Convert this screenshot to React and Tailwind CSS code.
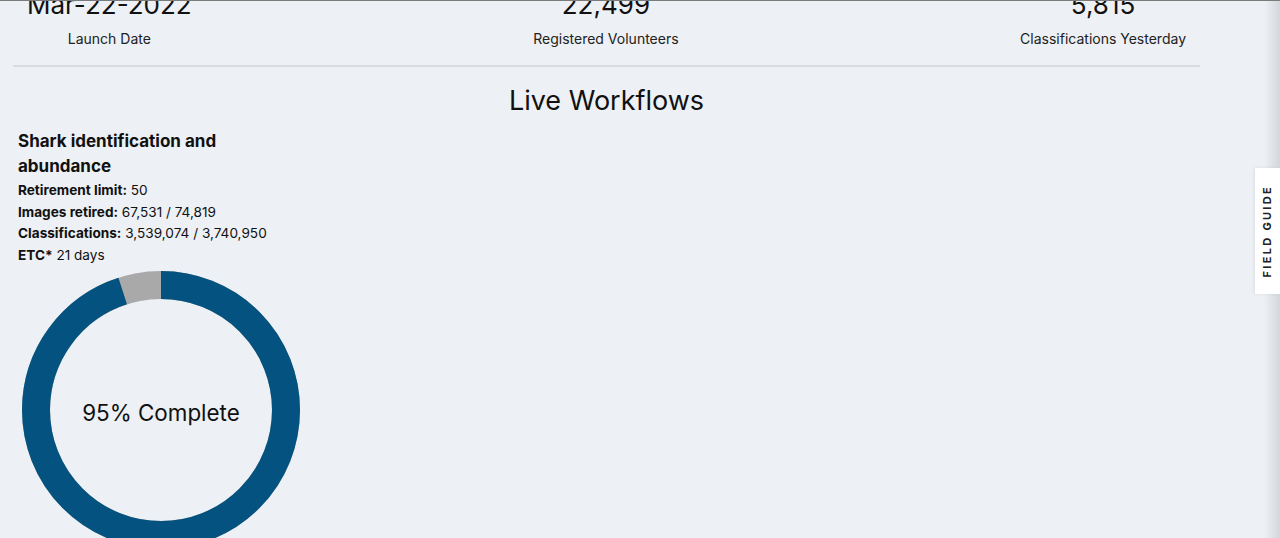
export default function App() {
  const stats = [
    { value: "Mar-22-2022", label: "Launch Date" },
    { value: "22,499", label: "Registered Volunteers" },
    { value: "5,815", label: "Classifications Yesterday" },
  ];

  // donut geometry
  const size = 278;
  const r = 125;
  const circ = 2 * Math.PI * r;
  const pct = 0.95;

  return (
    <div
      className="relative h-[538px] overflow-hidden border-t border-[#7b7b7b] bg-[#edf0f4] text-[#111]"
      style={{ fontFamily: "Inter, 'Noto Sans', sans-serif" }}
    >
      <div className="mt-[-14px] flex w-[1213px] justify-between px-[13px]">
        {stats.map((s) => (
          <div key={s.label} className="flex flex-col items-center px-[14px]">
            <div className="text-[26px] leading-[36px]">{s.value}</div>
            <div className="mt-[6px] text-[14px] leading-[20px] text-[#222]">{s.label}</div>
          </div>
        ))}
      </div>

      <div className="mx-[13px] mt-[16px] h-[2px] w-[1187px] bg-[#d9dbdf]" />

      <h2 className="mt-[18px] w-[1213px] text-center text-[27px] leading-[32px]">
        Live Workflows
      </h2>

      <div className="ml-[18px] mt-[12px] w-[290px]">
        <h3 className="w-[230px] text-[17px] font-bold leading-[25px]">
          Shark identification and abundance
        </h3>
        <div className="mt-[1px] text-[13.6px] leading-[21.7px]">
          <p>
            <span className="font-bold">Retirement limit:</span> 50
          </p>
          <p>
            <span className="font-bold">Images retired:</span> 67,531 / 74,819
          </p>
          <p>
            <span className="font-bold">Classifications:</span> 3,539,074 / 3,740,950
          </p>
          <p>
            <span className="font-bold">ETC*</span> 21 days
          </p>
        </div>

        <div className="relative ml-[4px] mt-[4px] h-[278px] w-[278px]">
          <svg width={size} height={size} viewBox={`0 0 ${size} ${size}`}>
            <circle cx="139" cy="139" r={r} fill="none" stroke="#a9a9a9" strokeWidth="28" />
            <circle
              cx="139"
              cy="139"
              r={r}
              fill="none"
              stroke="#04527f"
              strokeWidth="28"
              strokeDasharray={`${circ * pct} ${circ}`}
              transform="rotate(-90 139 139)"
            />
          </svg>
          <div className="absolute inset-0 flex items-center justify-center pt-[6px] text-[22.4px]">
            95% Complete
          </div>
        </div>
      </div>

      <div className="pointer-events-none absolute right-0 top-0 h-full w-[16px] bg-gradient-to-r from-transparent to-[#d3d6da]" />

      <div className="absolute right-0 top-[167px] flex h-[126px] w-[25px] items-center justify-center bg-white shadow-[-1px_0_3px_rgba(0,0,0,0.08)]">
        <span className="-rotate-90 whitespace-nowrap text-[11px] font-bold tracking-[2.3px] text-[#222]">
          FIELD GUIDE
        </span>
      </div>
    </div>
  );
}
